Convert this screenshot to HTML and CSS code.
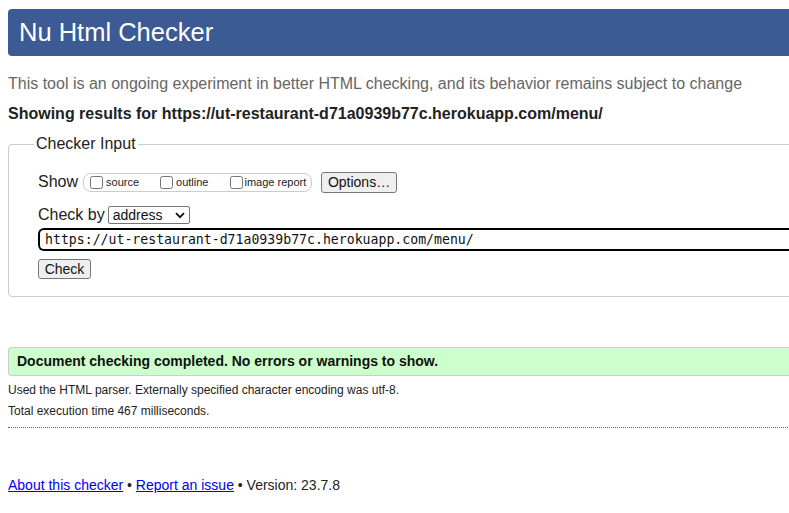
FILE: index.html
```html
<!DOCTYPE html>
<html lang="en">
<head>
<meta charset="utf-8">
<title>Nu Html Checker</title>
<link rel="stylesheet" href="styles.css">
</head>
<body>
<div class="page">
  <h1 class="banner">Nu Html Checker</h1>
  <p class="intro">This tool is an ongoing experiment in better HTML checking, and its behavior remains subject to change</p>
  <p class="showing">Showing results for https://ut-restaurant-d71a0939b77c.herokuapp.com/menu/</p>
  <fieldset class="checker">
    <legend>Checker Input</legend>
    <div class="row row-show">
      <span class="label">Show</span>
      <span class="pill">
        <label class="opt opt-source"><input type="checkbox"><span>source</span></label>
        <label class="opt opt-outline"><input type="checkbox"><span>outline</span></label>
        <label class="opt opt-image"><input type="checkbox"><span>image report</span></label>
      </span>
      <button class="btn btn-options" type="button">Options…</button>
    </div>
    <div class="row row-by">
      <span class="label">Check by</span>
      <span class="select">address<svg class="chev" width="10" height="7" viewBox="0 0 10 7"><path d="M1 1.2 L5 5.2 L9 1.2" fill="none" stroke="#111" stroke-width="1.8"/></svg></span>
    </div>
    <div class="row row-url">
      <div class="url">https://ut-restaurant-d71a0939b77c.herokuapp.com/menu/</div>
    </div>
    <div class="row row-check">
      <button class="btn btn-check" type="button">Check</button>
    </div>
  </fieldset>
  <div class="success">Document checking completed. No errors or warnings to show.</div>
  <div class="details">
    <p>Used the HTML parser. Externally specified character encoding was utf-8.</p>
    <p>Total execution time 467 milliseconds.</p>
  </div>
  <hr class="dots">
  <p class="footer"><a href="#">About this checker</a> • <a href="#">Report an issue</a> • Version: 23.7.8</p>
</div>
</body>
</html>
```

FILE: styles.css
```css
html {
  overflow: hidden;
}
body {
  margin: 0;
  background: #fff;
  font-family: "Liberation Sans", Arial, sans-serif;
  color: #222;
}
.page {
  width: 1000px;
  padding: 9px 8px 0;
}
.banner {
  margin: 0;
  height: 47px;
  line-height: 47px;
  padding-left: 11px;
  background: #3c5a94;
  color: #fff;
  font-size: 25.5px;
  font-weight: normal;
  border-radius: 4px 0 0 4px;
}
.intro {
  margin: 19px 0 0;
  font-size: 16px;
  line-height: 18px;
  color: #666;
}
.showing {
  margin: 12px 0 0;
  font-size: 16px;
  line-height: 18px;
  font-weight: bold;
  color: #222;
}
.checker {
  margin: 12px 0 0;
  padding: 18px 29px 17px;
  border: 1px solid #ccc;
  border-radius: 4px 0 0 4px;
  min-width: 0;
}
.checker legend {
  font-size: 16px;
  line-height: 18px;
  padding: 0 2px;
  margin-left: -4px;
  color: #222;
}
.row {
  display: flex;
  align-items: center;
}
.label {
  font-size: 16px;
  color: #222;
}
.row-show {
  height: 22px;
}
.pill {
  display: flex;
  align-items: center;
  margin-left: 5px;
  width: 229px;
  height: 19px;
  box-sizing: border-box;
  border: 1px solid #ccc;
  border-radius: 8px;
  padding-left: 6px;
}
.opt {
  display: flex;
  align-items: center;
  font-size: 11px;
  color: #222;
}
.opt input {
  margin: 0 3px 0 0;
  width: 13px;
  height: 13px;
}
.opt-outline {
  margin-left: 21px;
}
.opt-image {
  margin-left: 22px;
}
.opt-image input {
  margin-right: 1px;
}
.btn {
  font-family: "Liberation Sans", Arial, sans-serif;
  font-size: 14px;
  color: #111;
  background: #efefef;
  border: 1px solid #767676;
  border-radius: 3px;
  padding: 0;
  box-sizing: border-box;
}
.btn-options {
  margin-left: 9px;
  width: 76px;
  height: 21px;
}
.row-by {
  margin-top: 12px;
  height: 20px;
}
.select {
  display: flex;
  align-items: center;
  justify-content: space-between;
  margin-left: 3px;
  width: 82px;
  height: 18px;
  box-sizing: border-box;
  border: 1px solid #767676;
  border-radius: 2px;
  padding: 0 4px 0 4px;
  font-size: 14px;
  color: #111;
  background: #fff;
}
.row-url {
  margin-top: 3px;
}
.url {
  flex: 1;
  height: 23px;
  box-sizing: border-box;
  border: 2px solid #000;
  border-right: none;
  border-radius: 6px 0 0 6px;
  padding-left: 5px;
  font-family: "DejaVu Sans Mono", "Liberation Mono", monospace;
  font-size: 13.2px;
  line-height: 19px;
  color: #111;
  margin-right: -30px;
}
.row-check {
  margin-top: 8px;
}
.btn-check {
  width: 53px;
  height: 20px;
}
.success {
  margin-top: 50px;
  height: 29px;
  box-sizing: border-box;
  border: 1px solid #ccc;
  border-right: none;
  border-radius: 4px 0 0 4px;
  background: #ccffcc;
  padding-left: 8px;
  font-size: 14px;
  font-weight: bold;
  line-height: 27px;
  color: #111;
}
.details {
  margin-top: 4px;
}
.details p {
  margin: 0;
  font-size: 12px;
  line-height: 21px;
  color: #222;
}
.dots {
  margin: 5px 0 0;
  border: none;
  border-top: 1px dotted #666;
  height: 0;
}
.footer {
  margin: 49px 0 0;
  font-size: 14px;
  line-height: 17px;
  color: #222;
}
.footer a {
  color: #0000ee;
}
```
